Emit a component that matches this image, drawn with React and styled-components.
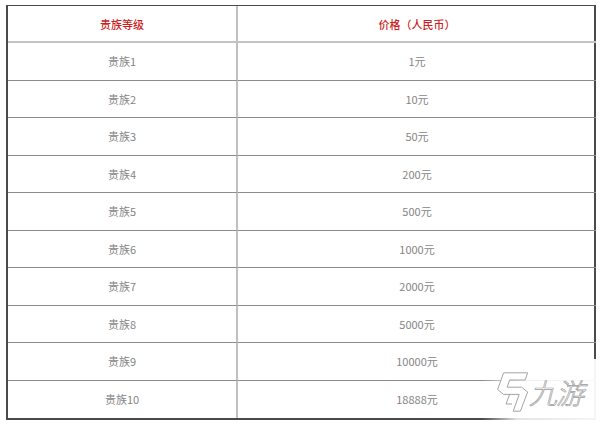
import React from 'react';
import styled, { createGlobalStyle } from 'styled-components';

const GlobalStyle = createGlobalStyle`
  html, body {
    margin: 0;
    padding: 0;
    background: #fff;
  }
  body {
    font-family: "Noto Sans CJK SC", "Liberation Sans", sans-serif;
  }
`;

const Page = styled.div`
  position: relative;
  width: 600px;
  height: 425px;
  padding: 5px 0 0 6px;
  box-sizing: border-box;
  overflow: hidden;
`;

const Table = styled.div`
  display: grid;
  grid-template-columns: 230px 358px;
  grid-template-rows: 37px repeat(10, 37.5px);
  width: 590px;
  border: 1px solid #4a4a4a;
  border-width: 1px 2px 2px 2px;
  box-sizing: border-box;
`;

const Cell = styled.div`
  display: flex;
  align-items: center;
  justify-content: center;
  font-size: 11px;
  font-weight: ${p => (p.head ? 500 : 400)};
  color: ${p => (p.head ? '#cc1f25' : '#858585')};
  border-bottom: ${p => (p.last ? 'none' : p.head ? '2px solid #c4c4c4' : '1px solid #8c8c8c')};
  border-right: ${p => (p.left ? '2px solid #c0c0c0' : 'none')};
  box-sizing: border-box;
`;

const Watermark = styled.div`
  position: absolute;
  right: 0;
  bottom: 0;
  width: 118px;
  height: 66px;
  display: flex;
  align-items: center;
  gap: 2px;
  padding-left: 12px;
  box-sizing: border-box;
  background: linear-gradient(90deg, rgba(255,255,255,0) 0%, rgba(255,255,255,0.85) 30%, rgba(255,255,255,0.95) 100%);
`;

const Brand = styled.span`
  font-family: "Noto Sans CJK SC", sans-serif;
  font-size: 28px;
  font-weight: 300;
  color: #fff;
  -webkit-text-stroke: 0.7px #9c9c9c;
  transform: skewX(-14deg);
  letter-spacing: -1px;
  line-height: 1;
  white-space: nowrap;
  flex-shrink: 0;
`;

const rows = [
  ['贵族1', '1元'],
  ['贵族2', '10元'],
  ['贵族3', '50元'],
  ['贵族4', '200元'],
  ['贵族5', '500元'],
  ['贵族6', '1000元'],
  ['贵族7', '2000元'],
  ['贵族8', '5000元'],
  ['贵族9', '10000元'],
  ['贵族10', '18888元'],
];

function Logo() {
  return (
    <svg width="36" height="44" viewBox="0 0 30 36" fill="none" stroke="#a0a0a0" strokeWidth="0.8" strokeLinejoin="round" style={{ flexShrink: 0 }}>
      <path d="M8 2 L28 2 L26 8 L13 8 L11 14 L23 14 L28 18 L22 34 L16 34 L21 20 L8 20 L3 16 Z" fill="#fff" />
      <path d="M13 20 L10 28 L15 28" />
    </svg>
  );
}

export default function App() {
  return (
    <>
      <GlobalStyle />
      <Page>
        <Table>
          <Cell head left>贵族等级</Cell>
          <Cell head>价格（人民币）</Cell>
          {rows.map(([name, price], i) => (
            <React.Fragment key={name}>
              <Cell left last={i === rows.length - 1}>{name}</Cell>
              <Cell last={i === rows.length - 1}>{price}</Cell>
            </React.Fragment>
          ))}
        </Table>
        <Watermark>
          <Logo />
          <Brand>九游</Brand>
        </Watermark>
      </Page>
    </>
  );
}
